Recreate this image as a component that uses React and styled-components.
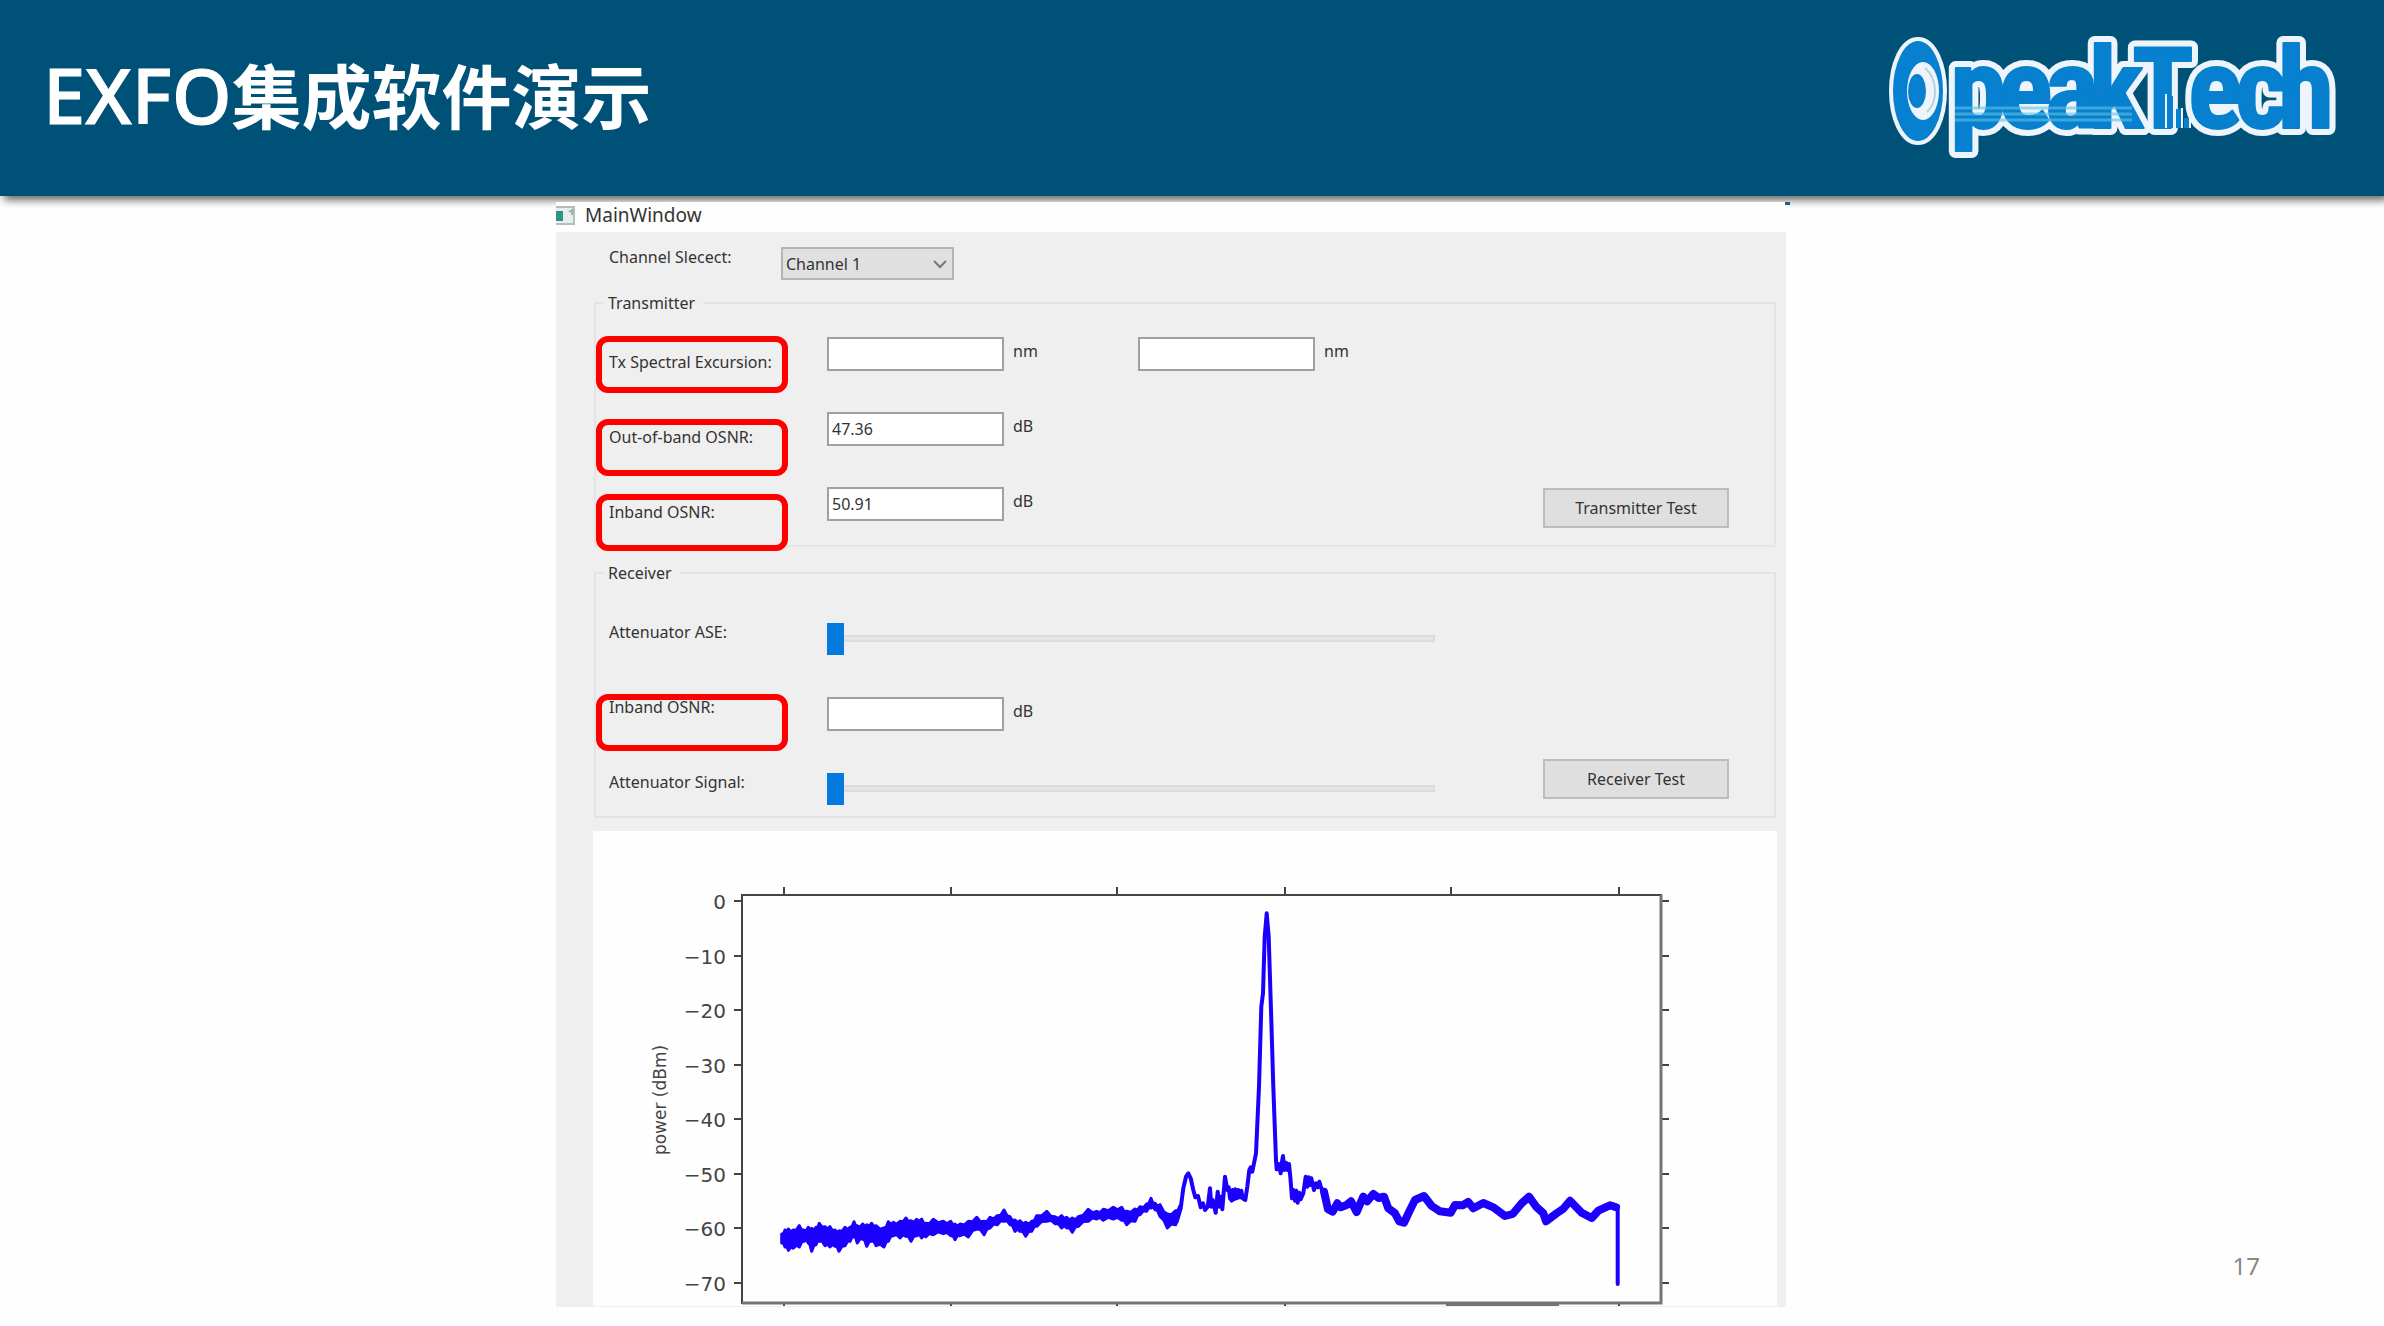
import { useState } from "react";
import styled, { createGlobalStyle } from "styled-components";

const GlobalStyle = createGlobalStyle`
  * {
    box-sizing: border-box;
  }

  body {
    margin: 0;
    background: #fefefe;
    color: #333;
    font-family: "Noto Sans", "Noto Sans CJK SC", sans-serif;
  }
`;

const Slide = styled.div`
  min-height: 100vh;
  display: flex;
  flex-direction: column;
`;

const Header = styled.header`
  position: relative;
  display: flex;
  justify-content: space-between;
  align-items: flex-start;
  height: 196px;
  padding: 30px 44px 0 43px;
  background: #005177;
  box-shadow: 4px 4px 8px rgba(0, 0, 0, 0.6);
`;

const Heading = styled.h1`
  margin: 0;
  padding-top: 14px;
  color: #fff;
  font-size: 70px;
  font-weight: 700;
  line-height: 100px;
  font-family: "Noto Sans CJK SC", sans-serif;
`;

const Latin = styled.span`
  font-family: "Noto Sans", sans-serif;
  font-size: 76px;
  font-weight: 500;
  -webkit-text-stroke: 1px #fff;
`;

const Logo = styled.svg`
  display: block;
  width: 456px;
  height: 140px;
  overflow: visible;
`;

const LogoText = styled.text`
  font-family: "Roboto Condensed", "Open Sans Condensed", "Liberation Sans Narrow",
    "Liberation Serif", serif;
  font-size: ${(props) => props.$size}px;
  font-weight: 700;
  stroke-linejoin: round;
`;

const Content = styled.main`
  flex: 1;
  display: grid;
  grid-template-columns: 556fr 1230fr 598fr;
  align-items: start;
  padding-top: 6px;
`;

const Window = styled.section`
  position: relative;
  grid-column: 2;
  background: #f0eff0;
`;

const CornerHandle = styled.span`
  position: absolute;
  top: 0;
  right: -4px;
  width: 5px;
  height: 3px;
  background: #1d5f80;
`;

const TitleBar = styled.div`
  display: flex;
  align-items: center;
  gap: 10px;
  height: 30px;
  padding-bottom: 4px;
  background: #fefefe;
  font-size: 19px;
`;

const ChannelRow = styled.div`
  display: flex;
  align-items: flex-start;
  height: 59px;
  padding: 15px 10px 0 53px;
`;

const ChannelLabel = styled.label`
  width: 172px;
  font-size: 16px;
  line-height: 20px;
`;

const SelectWrap = styled.div`
  position: relative;

  svg {
    position: absolute;
    right: 6px;
    top: 12px;
    pointer-events: none;
  }
`;

const Select = styled.select`
  appearance: none;
  width: 173px;
  height: 33px;
  padding: 0 24px 0 3px;
  border: 2px solid #b4b4b6;
  border-radius: 0;
  background: #e0e0e1;
  color: #333;
  font: 16px "Noto Sans", sans-serif;
`;

const Group = styled.fieldset`
  margin: 0 10px 14px 38px;
  padding: 0;
  border: 2px solid #e4e4e6;
`;

const Legend = styled.legend`
  margin-left: 8px;
  padding: 0 8px 0 4px;
  font-size: 16px;
  line-height: 24px;
`;

const GroupBody = styled.div`
  display: flex;
  align-items: flex-end;
  padding-left: 13px;
`;

const Rows = styled.div`
  flex: 1;
  display: flex;
  flex-direction: column;
  gap: 41px;
  padding: ${(props) => props.$padding};
`;

const Row = styled.div`
  display: flex;
  align-items: flex-start;
  height: 34px;
`;

const LabelCell = styled.div`
  position: relative;
  width: 218px;
  padding-top: ${(props) => (props.$low ? 15 : 0)}px;
  font-size: 16px;
  line-height: 20px;
`;

const Mark = styled.span`
  position: absolute;
  left: -13px;
  top: ${(props) => props.$top}px;
  width: 192px;
  height: 57px;
  border: 6px solid #fe0000;
  border-radius: 12px;
  pointer-events: none;
`;

const TextBox = styled.input`
  width: 177px;
  height: 34px;
  padding: 0 3px;
  border: 2px solid #a0a0a2;
  border-radius: 0;
  background: #fff;
  color: #333;
  font: 16px "Noto Sans", sans-serif;
`;

const Unit = styled.span`
  width: 134px;
  padding: 4px 0 0 9px;
  font-size: 16px;
  line-height: 20px;
`;

const Slider = styled.input`
  appearance: none;
  width: 100%;
  max-width: 608px;
  height: 32px;
  margin: 0;
  background: transparent;

  &::-webkit-slider-runnable-track {
    height: 7px;
    background: #e5e5e6;
    box-shadow: inset 0 0 0 2px #dcdcdd;
  }

  &::-webkit-slider-thumb {
    appearance: none;
    width: 17px;
    height: 32px;
    margin-top: -12px;
    background: #047bdc;
  }
`;

const Button = styled.button`
  width: 186px;
  height: 40px;
  margin: 0 45px 17px 0;
  padding: 0;
  border: 2px solid #bcbcbe;
  background: #e0dfe0;
  color: #333;
  font: 16px "Noto Sans", sans-serif;
`;

const Chart = styled.svg`
  display: block;
  width: calc(100% - 46px);
  margin: -1px 0 0 37px;
  border-bottom: 1px solid #f0eff0;
  background: #fefefe;
`;

const TickLabel = styled.text`
  fill: #444;
  font-family: "DejaVu Sans", sans-serif;
  font-size: 20px;
  text-anchor: end;
`;

const AxisLabel = styled.text`
  fill: #444;
  font-family: "DejaVu Sans", sans-serif;
  font-size: 17px;
  text-anchor: middle;
`;

const PageNumber = styled.footer`
  position: absolute;
  right: 124px;
  top: 1250px;
  color: #898989;
  font-size: 24px;
  line-height: 32px;
`;

// noise floor left of the peak: x, upper edge, lower edge
const noise = [
  [65, 220, 250], [75, 208, 262], [85, 205, 272], [100, 208, 266], [118, 195, 262],
  [132, 208, 245], [145, 200, 250], [155, 203, 275], [168, 200, 255], [178, 188, 245],
  [195, 198, 258], [210, 198, 262], [225, 208, 260], [237, 210, 275], [255, 200, 258],
  [270, 200, 245], [282, 183, 232], [292, 195, 250], [308, 190, 238], [320, 192, 260],
  [335, 188, 245], [348, 195, 258], [372, 202, 262], [385, 183, 245], [400, 185, 228],
  [420, 182, 235], [438, 172, 230], [453, 180, 245], [470, 176, 228], [485, 175, 235],
  [497, 188, 232], [520, 176, 225], [550, 182, 222], [572, 182, 228], [585, 190, 240],
  [600, 190, 228], [625, 182, 232], [650, 170, 208], [672, 182, 225], [690, 170, 205],
  [712, 165, 195], [732, 148, 185], [750, 168, 195], [765, 178, 215], [780, 180, 215],
  [797, 185, 230], [815, 182, 215], [830, 165, 200], [860, 152, 185], [885, 168, 192],
  [905, 165, 205], [920, 170, 205], [937, 172, 218], [955, 168, 200], [985, 146, 185],
  [1010, 152, 178], [1030, 146, 182], [1060, 140, 178], [1085, 140, 182], [1100, 152, 195],
  [1125, 145, 185], [1140, 138, 165], [1160, 130, 155], [1173, 113, 145], [1185, 128, 150],
  [1200, 132, 170], [1222, 160, 205], [1247, 150, 195], [1260, 135, 150],
];

const peak = [
  [1250, 185], [1262, 145], [1270, 85], [1278, 50], [1285, 40], [1292, 55], [1300, 90],
  [1306, 112], [1314, 108], [1322, 142], [1329, 130], [1335, 150], [1343, 140], [1350, 85],
  [1354, 140], [1358, 120], [1367, 158], [1373, 95], [1378, 140], [1382, 110], [1387, 148],
  [1395, 50], [1402, 90], [1406, 82], [1410, 115], [1415, 122], [1418, 90], [1422, 118],
  [1426, 88], [1431, 115], [1435, 90], [1440, 112], [1444, 92], [1448, 115], [1456, 120],
  [1462, 80], [1468, 30], [1472, 22], [1477, 35], [1488, -20], [1497, -220], [1504, -460],
  [1509, -500], [1514, -670], [1520, -740], [1526, -670], [1534, -420], [1540, -220],
  [1548, 0], [1550, 28], [1556, 12], [1562, 40], [1566, 5], [1569, -12], [1573, 30],
  [1578, 8], [1583, 30], [1587, 12], [1591, 50], [1596, 115], [1600, 90], [1605, 122],
  [1609, 92], [1613, 128], [1618, 98], [1622, 118], [1630, 100], [1637, 50], [1642, 80],
  [1646, 52], [1650, 75], [1654, 55], [1662, 90], [1668, 70], [1673, 82], [1678, 65],
  [1684, 85], [1692, 95], [1700, 145],
];

const tail = [
  [1692, 95], [1704, 148], [1718, 155], [1732, 130], [1742, 142], [1758, 136], [1773, 124],
  [1790, 156], [1810, 110], [1822, 124], [1840, 102], [1856, 114], [1872, 110], [1885, 145],
  [1905, 160], [1918, 184], [1932, 188], [1950, 150], [1965, 120], [1992, 108], [2015, 138],
  [2040, 154], [2072, 158], [2085, 135], [2108, 136], [2125, 126], [2140, 145], [2170, 129],
  [2200, 142], [2235, 168], [2258, 162], [2285, 130], [2307, 110], [2330, 142], [2350, 160],
  [2358, 184], [2390, 160], [2410, 146], [2430, 122], [2465, 158], [2495, 174], [2515, 152],
  [2550, 136], [2568, 142],
];

const drop = [[2573, 138], [2573, 372]];

// the trace was sampled at three units per pixel
const toPoint = ([x, y]) => `${(x / 3 + 167).toFixed(1)},${(y / 3 + 329).toFixed(1)}`;

// puts a small notch between each pair of samples so the edge stays ragged
const ragged = (points, depth) =>
  points.flatMap(([x, y], i) => {
    const next = points[i + 1];
    if (!next) return [[x, y]];
    return [[x, y], [(x + next[0]) / 2, (y + next[1]) / 2 + depth]];
  });

const noiseOutline = [
  ...ragged(noise.map(([x, top]) => [x, top + 2]), 7),
  ...ragged(noise.map(([x, , bottom]) => [x, bottom - 1]), -7).reverse(),
];

const yTicks = [0, -10, -20, -30, -40, -50, -60, -70];
const xTicks = [191, 358, 524, 692, 858, 1026];

const tickY = (value) => Math.round(70 - value * 5.45);

const SpectrumChart = () => (
  <Chart viewBox="0 0 1184 475" role="img" aria-label="power (dBm)">
    <g stroke="#444" strokeWidth="2">
      {xTicks.map((x) => (
        <path key={x} d={`M${x} 56V64M${x} 472V475`} />
      ))}
      {yTicks.map((value) => (
        <path key={value} d={`M141 ${tickY(value)}H149M1068 ${tickY(value)}H1076`} />
      ))}
      <path d="M149 473V64H1069" fill="none" />
    </g>
    <path d="M1068 64V472H149" fill="none" stroke="#747474" strokeWidth="3" />
    <path d="M853 474H966" stroke="#747474" strokeWidth="3" />
    {yTicks.map((value) => (
      <TickLabel key={value} x="133" y={tickY(value) + 8}>
        {value < 0 ? `−${-value}` : value}
      </TickLabel>
    ))}
    <AxisLabel transform="translate(73 269) rotate(-90)">power (dBm)</AxisLabel>
    <g fill="none" stroke="#1b00fd" strokeLinejoin="round" strokeLinecap="round">
      <polygon points={noiseOutline.map(toPoint).join(" ")} fill="#1b00fd" strokeWidth="3" />
      <polyline points={peak.map(toPoint).join(" ")} strokeWidth="4" />
      <polyline points={tail.map(toPoint).join(" ")} strokeWidth="8" />
      <polyline points={drop.map(toPoint).join(" ")} strokeWidth="4" />
    </g>
  </Chart>
);

const letterX = "66 114 161 205 248 304 351 394";

const OpeakTechLogo = () => (
  <Logo viewBox="0 0 456 140" role="img" aria-label="OpeakTech">
    <g fill="#eef4fb" stroke="#eef4fb" strokeWidth="14">
      <LogoText $size={114} x={letterX} y="98">
        peakTech
      </LogoText>
      <ellipse cx="34" cy="61" rx="22" ry="47" />
    </g>
    <LogoText $size={72} x="13" y="86" fill="#0680cf">
      O
    </LogoText>
    <LogoText $size={114} x={letterX} y="98" fill="#0680cf" stroke="#0680cf" strokeWidth="2">
      peakTech
    </LogoText>
    <path d="M71 78H248M71 84H248M71 90H248" stroke="#5fc3e4" strokeWidth="3" opacity="0.6" />
    <path d="M283 66h6v32h-6zM292 79h5v19h-5zM300 88h5v10h-5z" fill="#0680cf" />
    <path d="M282 64V98M290 66V98M298 78V98M306 86V98" stroke="#eef4fb" strokeWidth="2" />
    <ellipse cx="34" cy="61" rx="25" ry="50" fill="#0680cf" />
    <ellipse cx="39" cy="61" rx="16" ry="29" fill="#eef4fb" />
    <path d="M41 38C54 49 54 72 43 82" fill="none" stroke="#b9cfe4" strokeWidth="2" />
    <ellipse cx="33" cy="61" rx="9" ry="17" fill="#0680cf" />
  </Logo>
);

const Field = ({ id, label, unit, value, onChange, markTop, low, children }) => (
  <Row>
    <LabelCell $low={low}>
      <label htmlFor={id}>{label}</label>
      <Mark $top={markTop} />
    </LabelCell>
    <TextBox id={id} value={value} onChange={onChange} />
    <Unit>{unit}</Unit>
    {children}
  </Row>
);

const App = () => {
  const [values, setValues] = useState({
    excursionMin: "",
    excursionMax: "",
    outOfBand: "47.36",
    inband: "50.91",
    rxInband: "",
  });

  const handleChange = (name) => (e) => {
    setValues({ ...values, [name]: e.target.value });
  };

  return (
    <Slide>
      <GlobalStyle />
      <Header>
        <Heading>
          <Latin>EXFO</Latin>集成软件演示
        </Heading>
        <OpeakTechLogo />
      </Header>
      <Content>
        <Window>
          <CornerHandle />
          <TitleBar>
            <svg width="19" height="19" viewBox="0 0 19 19" aria-hidden="true">
              <path d="M0 1H18V18H0" fill="#e8eeee" stroke="#b5bcbc" strokeWidth="2" />
              <rect y="5" width="7" height="10" fill="#2c9484" />
              <path d="M13 6l3-2v5" fill="none" stroke="#8fb5ad" strokeWidth="2" />
            </svg>
            MainWindow
          </TitleBar>
          <ChannelRow>
            <ChannelLabel htmlFor="channel">Channel Slecect:</ChannelLabel>
            <SelectWrap>
              <Select id="channel">
                <option>Channel 1</option>
              </Select>
              <svg width="16" height="10" viewBox="0 0 16 10" aria-hidden="true">
                <path d="M2 2l6 6 6-6" fill="none" stroke="#777" strokeWidth="2" />
              </svg>
            </SelectWrap>
          </ChannelRow>
          <Group>
            <Legend>Transmitter</Legend>
            <GroupBody>
              <Rows $padding="22px 0 24px">
                <Field
                  id="excursion-min"
                  label="Tx Spectral Excursion:"
                  unit="nm"
                  value={values.excursionMin}
                  onChange={handleChange("excursionMin")}
                  markTop={-1}
                  low>
                  <TextBox
                    aria-label="Tx Spectral Excursion"
                    value={values.excursionMax}
                    onChange={handleChange("excursionMax")}
                  />
                  <Unit>nm</Unit>
                </Field>
                <Field
                  id="out-of-band"
                  label="Out-of-band OSNR:"
                  unit="dB"
                  value={values.outOfBand}
                  onChange={handleChange("outOfBand")}
                  markTop={7}
                  low
                />
                <Field
                  id="inband"
                  label="Inband OSNR:"
                  unit="dB"
                  value={values.inband}
                  onChange={handleChange("inband")}
                  markTop={7}
                  low
                />
              </Rows>
              <Button type="button">Transmitter Test</Button>
            </GroupBody>
          </Group>
          <Group>
            <Legend>Receiver</Legend>
            <GroupBody>
              <Rows $padding="37px 0 10px">
                <Row>
                  <LabelCell>
                    <label htmlFor="ase">Attenuator ASE:</label>
                  </LabelCell>
                  <Slider id="ase" type="range" defaultValue="0" />
                </Row>
                <Field
                  id="rx-inband"
                  label="Inband OSNR:"
                  unit="dB"
                  value={values.rxInband}
                  onChange={handleChange("rxInband")}
                  markTop={-3}
                />
                <Row>
                  <LabelCell>
                    <label htmlFor="signal">Attenuator Signal:</label>
                  </LabelCell>
                  <Slider id="signal" type="range" defaultValue="0" />
                </Row>
              </Rows>
              <Button type="button">Receiver Test</Button>
            </GroupBody>
          </Group>
          <SpectrumChart />
        </Window>
      </Content>
      <PageNumber>17</PageNumber>
    </Slide>
  );
};

export default App;
